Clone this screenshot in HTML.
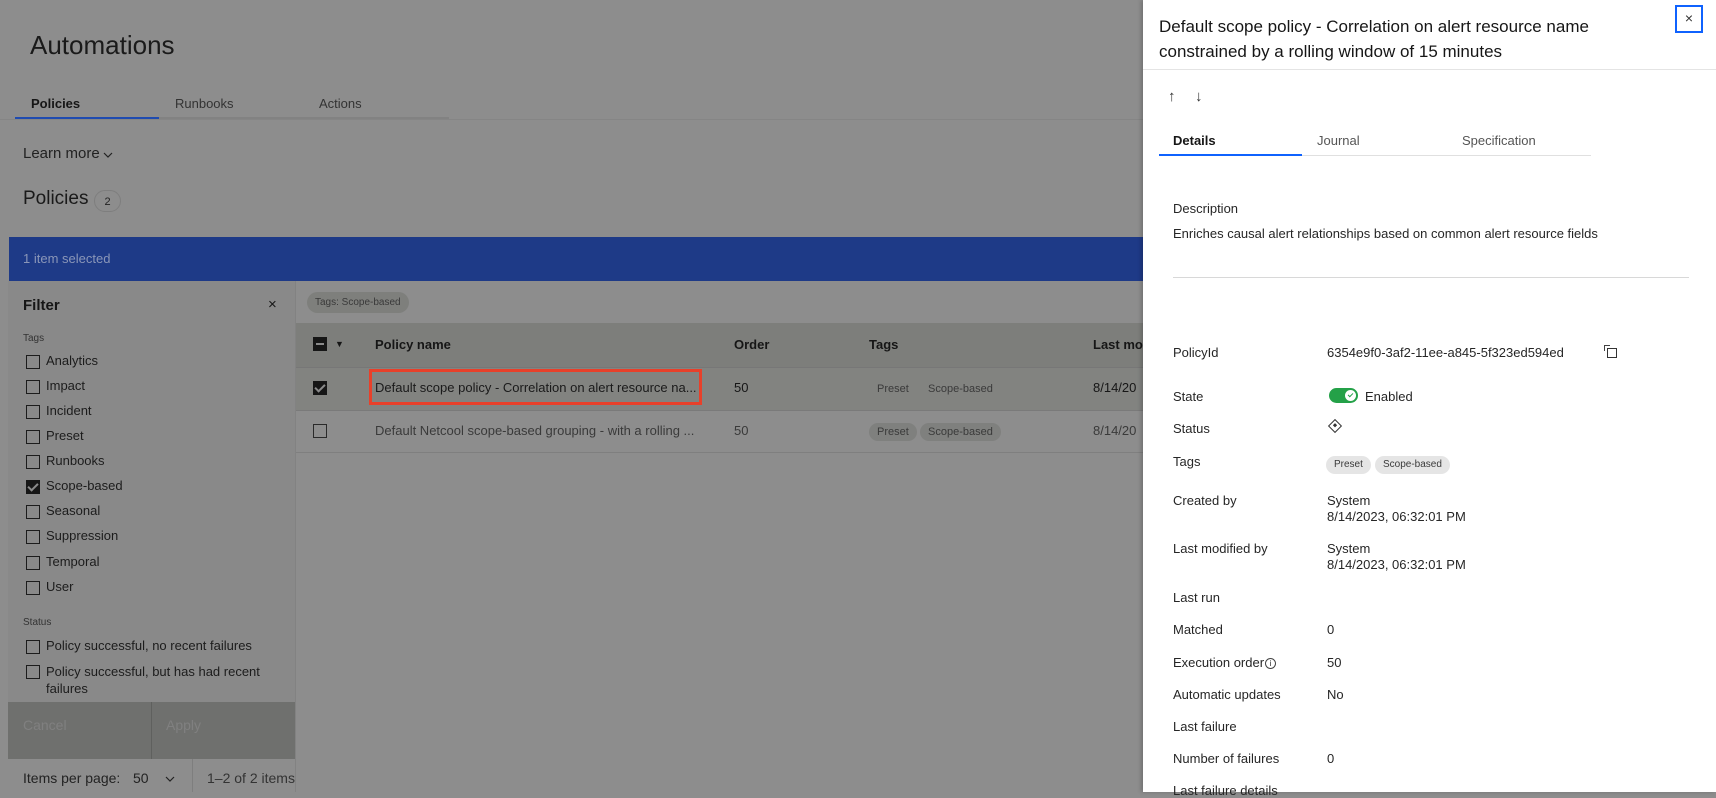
<!DOCTYPE html>
<html><head><style>
*{box-sizing:border-box;margin:0;padding:0}
body{width:1716px;height:792px;overflow:hidden;background:#8d8d8d;font-family:"Liberation Sans",sans-serif;color:#161616;position:relative;font-size:13px}
.a{position:absolute;white-space:nowrap}
.cb{position:absolute;width:14px;height:14px;border:1.5px solid #1c1c1c}
.cbk{position:absolute;width:14px;height:14px;background:#161616}
.cbk:after{content:"";position:absolute;left:4px;top:1px;width:4px;height:8px;border:solid #8a8a8a;border-width:0 2px 2px 0;transform:rotate(45deg)}
.chip{position:absolute;height:18px;border-radius:9px;font-size:11px;line-height:18px;padding:0 8px;color:#3a3a3a}
.lab{position:absolute;left:30px;font-size:13px;color:#1c1c1c}
.p{position:absolute;left:1173px;font-size:13px;color:#262626}
.v{position:absolute;left:1327px;font-size:13px;color:#262626}
</style></head><body>
<div class="a" style="left:30px;top:30px;font-size:26px;color:#1a1a1a">Automations</div>
<div class="a" style="left:31px;top:96px;font-size:13px;font-weight:bold">Policies</div>
<div class="a" style="left:175px;top:96px;font-size:13px;color:#333">Runbooks</div>
<div class="a" style="left:319px;top:96px;font-size:13px;color:#333">Actions</div>
<div class="a" style="left:15px;top:117px;width:144px;height:2px;background:#1f4bb0"></div>
<div class="a" style="left:159px;top:117px;width:290px;height:2px;background:#828282"></div>
<div class="a" style="left:0;top:119px;width:1143px;height:1px;background:#858585"></div>
<div class="a" style="left:23px;top:145px;font-size:15px;color:#222">Learn more</div>
<svg class="a" style="left:103px;top:151px" width="10" height="8" viewBox="0 0 10 8"><path d="M1 2 L5 6 L9 2" fill="none" stroke="#222" stroke-width="1.2"/></svg>
<div class="a" style="left:23px;top:188px;font-size:19px;color:#1a1a1a">Policies</div>
<div class="a" style="left:94px;top:190px;width:27px;height:22px;border:1px solid #7e7e7e;border-radius:11px;font-size:11px;text-align:center;line-height:22px;color:#222">2</div>
<div class="a" style="left:9px;top:237px;width:1134px;height:44px;background:#1e3a87"></div>
<div class="a" style="left:23px;top:251px;font-size:13px;color:#8a96b8">1 item selected</div>
<!-- filter -->
<div class="a" style="left:8px;top:281px;width:287px;height:478px;background:#898989"></div>
<div class="a" style="left:23px;top:297px;font-size:15px;font-weight:bold">Filter</div>
<div class="a" style="left:268px;top:296px;font-size:15px">×</div>
<div class="a" style="left:23px;top:333px;font-size:10px;color:#333">Tags</div>
<div class="cb" style="left:26px;top:355px"></div><div class="lab" style="left:46px;top:353px">Analytics</div>
<div class="cb" style="left:26px;top:380px"></div><div class="lab" style="left:46px;top:378px">Impact</div>
<div class="cb" style="left:26px;top:405px"></div><div class="lab" style="left:46px;top:403px">Incident</div>
<div class="cb" style="left:26px;top:430px"></div><div class="lab" style="left:46px;top:428px">Preset</div>
<div class="cb" style="left:26px;top:455px"></div><div class="lab" style="left:46px;top:453px">Runbooks</div>
<div class="cbk" style="left:26px;top:480px"></div><div class="lab" style="left:46px;top:478px">Scope-based</div>
<div class="cb" style="left:26px;top:505px"></div><div class="lab" style="left:46px;top:503px">Seasonal</div>
<div class="cb" style="left:26px;top:530px"></div><div class="lab" style="left:46px;top:528px">Suppression</div>
<div class="cb" style="left:26px;top:556px"></div><div class="lab" style="left:46px;top:554px">Temporal</div>
<div class="cb" style="left:26px;top:581px"></div><div class="lab" style="left:46px;top:579px">User</div>
<div class="a" style="left:23px;top:617px;font-size:10px;color:#333">Status</div>
<div class="cb" style="left:26px;top:640px"></div><div class="lab" style="left:46px;top:638px">Policy successful, no recent failures</div>
<div class="cb" style="left:26px;top:665px"></div><div class="lab" style="left:46px;top:663px;line-height:17px;white-space:normal;width:230px">Policy successful, but has had recent failures</div>
<div class="a" style="left:8px;top:702px;width:287px;height:57px;background:#6f706e"></div>
<div class="a" style="left:151px;top:702px;width:1px;height:57px;background:#5f605e"></div>
<div class="a" style="left:23px;top:717px;font-size:14px;color:#808080">Cancel</div>
<div class="a" style="left:166px;top:717px;font-size:14px;color:#808080">Apply</div>
<div class="a" style="left:23px;top:770px;font-size:14px;color:#222">Items per page:</div>
<div class="a" style="left:133px;top:770px;font-size:14px;color:#222">50</div>
<svg class="a" style="left:165px;top:775px" width="10" height="8" viewBox="0 0 10 8"><path d="M1 2 L5 6 L9 2" fill="none" stroke="#222" stroke-width="1.2"/></svg>
<div class="a" style="left:192px;top:759px;width:1px;height:33px;background:#7e7e7e"></div>
<div class="a" style="left:207px;top:770px;font-size:14px;color:#333">1–2 of 2 items</div>
<!-- table -->
<div class="a" style="left:295px;top:281px;width:1px;height:511px;background:#828282"></div>
<div class="chip" style="left:307px;top:292px;height:21px;line-height:21px;border-radius:11px;background:#7e7f7c;font-size:10px">Tags: Scope-based</div>
<div class="a" style="left:296px;top:323px;width:847px;height:44px;background:#7d7e7b"></div>
<div class="a" style="left:313px;top:337px;width:14px;height:14px;background:#161616"><div style="position:absolute;left:3px;top:6px;width:8px;height:2px;background:#8a8a8a"></div></div>
<div class="a" style="left:335px;top:339px;font-size:9px">▼</div>
<div class="a" style="left:375px;top:337px;font-size:13px;font-weight:bold">Policy name</div>
<div class="a" style="left:734px;top:337px;font-size:13px;font-weight:bold">Order</div>
<div class="a" style="left:869px;top:337px;font-size:13px;font-weight:bold">Tags</div>
<div class="a" style="left:1093px;top:337px;font-size:13px;font-weight:bold">Last mod</div>
<div class="a" style="left:296px;top:367px;width:847px;height:43px;background:#828380;border-top:1px solid #777"></div>
<div class="cbk" style="left:313px;top:381px"></div>
<div class="a" style="left:369px;top:369px;width:333px;height:36px;border:3px solid #e8402a"></div>
<div class="a" style="left:375px;top:380px;font-size:13px;color:#1a1a1a">Default scope policy - Correlation on alert resource na...</div>
<div class="a" style="left:734px;top:380px;font-size:13px">50</div>
<div class="chip" style="left:869px;top:380px">Preset</div>
<div class="chip" style="left:920px;top:380px">Scope-based</div>
<div class="a" style="left:1093px;top:380px;font-size:13px">8/14/20</div>
<div class="a" style="left:296px;top:410px;width:847px;height:1px;background:#7a7a7a"></div>
<div class="cb" style="left:313px;top:424px;border-color:#2a2a2a"></div>
<div class="a" style="left:375px;top:423px;font-size:13px;color:#3a3a3a">Default Netcool scope-based grouping - with a rolling ...</div>
<div class="a" style="left:734px;top:423px;font-size:13px;color:#3a3a3a">50</div>
<div class="chip" style="left:869px;top:423px;background:#7f807e">Preset</div>
<div class="chip" style="left:920px;top:423px;background:#7f807e">Scope-based</div>
<div class="a" style="left:1093px;top:423px;font-size:13px;color:#3a3a3a">8/14/20</div>
<div class="a" style="left:296px;top:452px;width:847px;height:1px;background:#7f7f7f"></div>
<!-- panel -->
<div class="a" style="left:1143px;top:0;width:573px;height:792px;background:#fff;box-shadow:-2px 0 4px rgba(0,0,0,.2)"></div>
<div class="a" style="left:1159px;top:14px;font-size:17px;line-height:25px;color:#161616">Default scope policy - Correlation on alert resource name<br>constrained by a rolling window of 15 minutes</div>
<div class="a" style="left:1675px;top:5px;width:28px;height:28px;border:2px solid #0f62fe;text-align:center;line-height:23px;font-size:14px;color:#333">×</div>
<div class="a" style="left:1143px;top:69px;width:573px;height:1px;background:#e4e4e4"></div>
<div class="a" style="left:1168px;top:88px;font-size:15px;color:#333">↑</div>
<div class="a" style="left:1195px;top:88px;font-size:15px;color:#333">↓</div>
<div class="a" style="left:1173px;top:133px;font-size:13px;font-weight:bold">Details</div>
<div class="a" style="left:1317px;top:133px;font-size:13px;color:#555">Journal</div>
<div class="a" style="left:1462px;top:133px;font-size:13px;color:#555">Specification</div>
<div class="a" style="left:1159px;top:154px;width:143px;height:2px;background:#0f62fe"></div>
<div class="a" style="left:1302px;top:155px;width:289px;height:1px;background:#e0e0e0"></div>
<div class="p" style="top:201px">Description</div>
<div class="p" style="top:226px">Enriches causal alert relationships based on common alert resource fields</div>
<div class="a" style="left:1173px;top:277px;width:516px;height:1px;background:#d8d8d8"></div>
<div class="p" style="top:345px">PolicyId</div><div class="v" style="top:345px">6354e9f0-3af2-11ee-a845-5f323ed594ed</div>
<div class="a" style="left:1604px;top:345px;width:6px;height:6px;border-left:1.5px solid #444;border-top:1.5px solid #444"></div>
<div class="a" style="left:1607px;top:348px;width:10px;height:10px;border:1.5px solid #333"></div>
<div class="p" style="top:389px">State</div>
<div class="a" style="left:1329px;top:388px;width:29px;height:15px;border-radius:8px;background:#24a148"></div>
<div class="a" style="left:1345px;top:390px;width:11px;height:11px;border-radius:6px;background:#fff"><div style="position:absolute;left:3.5px;top:2px;width:3px;height:5px;border:solid #24a148;border-width:0 1.5px 1.5px 0;transform:rotate(45deg)"></div></div>
<div class="v" style="left:1365px;top:389px">Enabled</div>
<div class="p" style="top:421px">Status</div>
<div class="a" style="left:1330px;top:421px;width:10px;height:10px;border:1.5px solid #333;transform:rotate(45deg)"><div style="position:absolute;left:2px;top:2px;width:3px;height:3px;background:#333"></div></div>
<div class="p" style="top:454px">Tags</div>
<div class="chip" style="left:1326px;top:456px;background:#e5e5e5;font-size:10px">Preset</div>
<div class="chip" style="left:1375px;top:456px;background:#e5e5e5;font-size:10px">Scope-based</div>
<div class="p" style="top:493px">Created by</div><div class="v" style="top:493px;line-height:16px">System<br>8/14/2023, 06:32:01 PM</div>
<div class="p" style="top:541px">Last modified by</div><div class="v" style="top:541px;line-height:16px">System<br>8/14/2023, 06:32:01 PM</div>
<div class="p" style="top:590px">Last run</div>
<div class="p" style="top:622px">Matched</div><div class="v" style="top:622px">0</div>
<div class="p" style="top:655px">Execution order<span style="display:inline-block;width:11px;height:11px;border:1px solid #444;border-radius:6px;font-size:8px;text-align:center;line-height:10px;vertical-align:1px;margin-left:1px">i</span></div><div class="v" style="top:655px">50</div>
<div class="p" style="top:687px">Automatic updates</div><div class="v" style="top:687px">No</div>
<div class="p" style="top:719px">Last failure</div>
<div class="p" style="top:751px">Number of failures</div><div class="v" style="top:751px">0</div>
<div class="p" style="top:783px">Last failure details</div>
</body></html>
